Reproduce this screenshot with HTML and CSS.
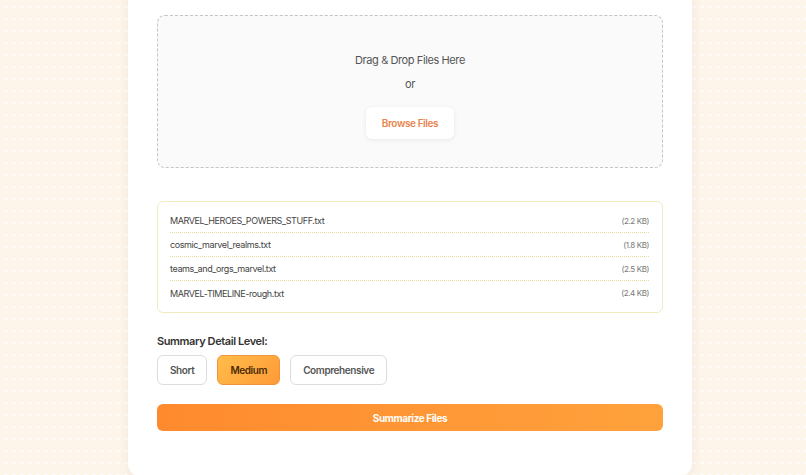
FILE: index.html
```html
<!DOCTYPE html>
<html lang="en">
<head>
<meta charset="utf-8">
<title>File Summarizer</title>
<link rel="stylesheet" href="styles.css">
</head>
<body>
<main class="card">
  <section class="dropzone">
    <p class="drop-title">Drag &amp; Drop Files Here</p>
    <p class="drop-or">or</p>
    <button class="browse-btn" type="button">Browse Files</button>
  </section>

  <ul class="file-list">
    <li class="file-row"><span class="file-name">MARVEL_HEROES_POWERS_STUFF.txt</span><span class="file-size">(2.2 KB)</span></li>
    <li class="file-row"><span class="file-name">cosmic_marvel_realms.txt</span><span class="file-size">(1.8 KB)</span></li>
    <li class="file-row"><span class="file-name">teams_and_orgs_marvel.txt</span><span class="file-size">(2.5 KB)</span></li>
    <li class="file-row"><span class="file-name">MARVEL-TIMELINE-rough.txt</span><span class="file-size">(2.4 KB)</span></li>
  </ul>

  <section class="detail">
    <h3 class="detail-label">Summary Detail Level:</h3>
    <div class="detail-options">
      <button class="opt" type="button">Short</button>
      <button class="opt opt-active" type="button">Medium</button>
      <button class="opt" type="button">Comprehensive</button>
    </div>
  </section>

  <button class="summarize-btn" type="button">Summarize Files</button>
</main>
</body>
</html>
```

FILE: styles.css
```css
* { box-sizing: border-box; }

html, body { height: 100%; }

body {
  margin: 0;
  font-family: Inter, "Noto Sans", "Liberation Sans", sans-serif;
  letter-spacing: -0.025em;
  background-color: #fdf4ea;
  background-image: radial-gradient(ellipse 2.2px 1.5px, rgba(255,255,255,0.8) 60%, transparent 100%);
  background-size: 8px 12px;
  background-position: 2px 1px;
  overflow: hidden;
}

.card {
  width: 564px;
  height: 491px;
  margin: -15px 0 0 128px;
  padding: 30px 29px 0;
  background: #fff;
  border-radius: 12px;
  box-shadow: 0 2px 10px rgba(170, 130, 80, 0.12);
}

.dropzone {
  border: 1.5px dashed #c4c4c4;
  border-radius: 8px;
  background: #fafafa;
  height: 153px;
  padding: 32px 20px 0;
  display: flex;
  flex-direction: column;
  align-items: center;
}

.drop-title,
.drop-or {
  margin: 0;
  font-size: 11px;
  line-height: 24px;
  color: #555;
}

.browse-btn {
  margin-top: 11px;
  height: 32px;
  padding: 0 16px;
  border: none;
  border-radius: 6px;
  background: #fff;
  box-shadow: 0 1px 4px rgba(0,0,0,0.08);
  font-family: inherit;
  letter-spacing: inherit;
  font-size: 10px;
  font-weight: 600;
  color: #e9834e;
}

.file-list {
  list-style: none;
  margin: 33px 0 0;
  padding: 7px 13px 7px 12px;
  border: 1px solid #f1ebc0;
  border-radius: 6px;
  height: 112px;
}

.file-row {
  display: flex;
  justify-content: space-between;
  align-items: center;
  height: 24px;
  border-bottom: 1px dotted #e6dc9c;
}

.file-row:last-child { border-bottom: none; }

.file-name {
  font-size: 9px;
  color: #444;
}

.file-size {
  font-size: 8px;
  color: #777;
}

.detail { margin-top: 21px; }

.detail-label {
  margin: 0;
  font-size: 11px;
  font-weight: 600;
  line-height: 14px;
  color: #333;
}

.detail-options {
  display: flex;
  gap: 10px;
  margin-top: 7px;
}

.opt {
  height: 30px;
  padding: 0 12px;
  border: 1.5px solid #ddd;
  border-radius: 6px;
  background: #fff;
  font-family: inherit;
  letter-spacing: inherit;
  font-size: 10px;
  font-weight: 600;
  color: #555;
}

.opt-active {
  background: linear-gradient(135deg, #ffbd4a, #ff9a38);
  border-color: #f0933a;
  color: #4a2a08;
}

.summarize-btn {
  display: block;
  width: 100%;
  height: 27px;
  margin-top: 19px;
  border: none;
  border-radius: 6px;
  background: linear-gradient(90deg, #ff8a2e, #ffa23c);
  font-family: inherit;
  letter-spacing: inherit;
  font-size: 10px;
  font-weight: 700;
  color: #fff;
}
```
